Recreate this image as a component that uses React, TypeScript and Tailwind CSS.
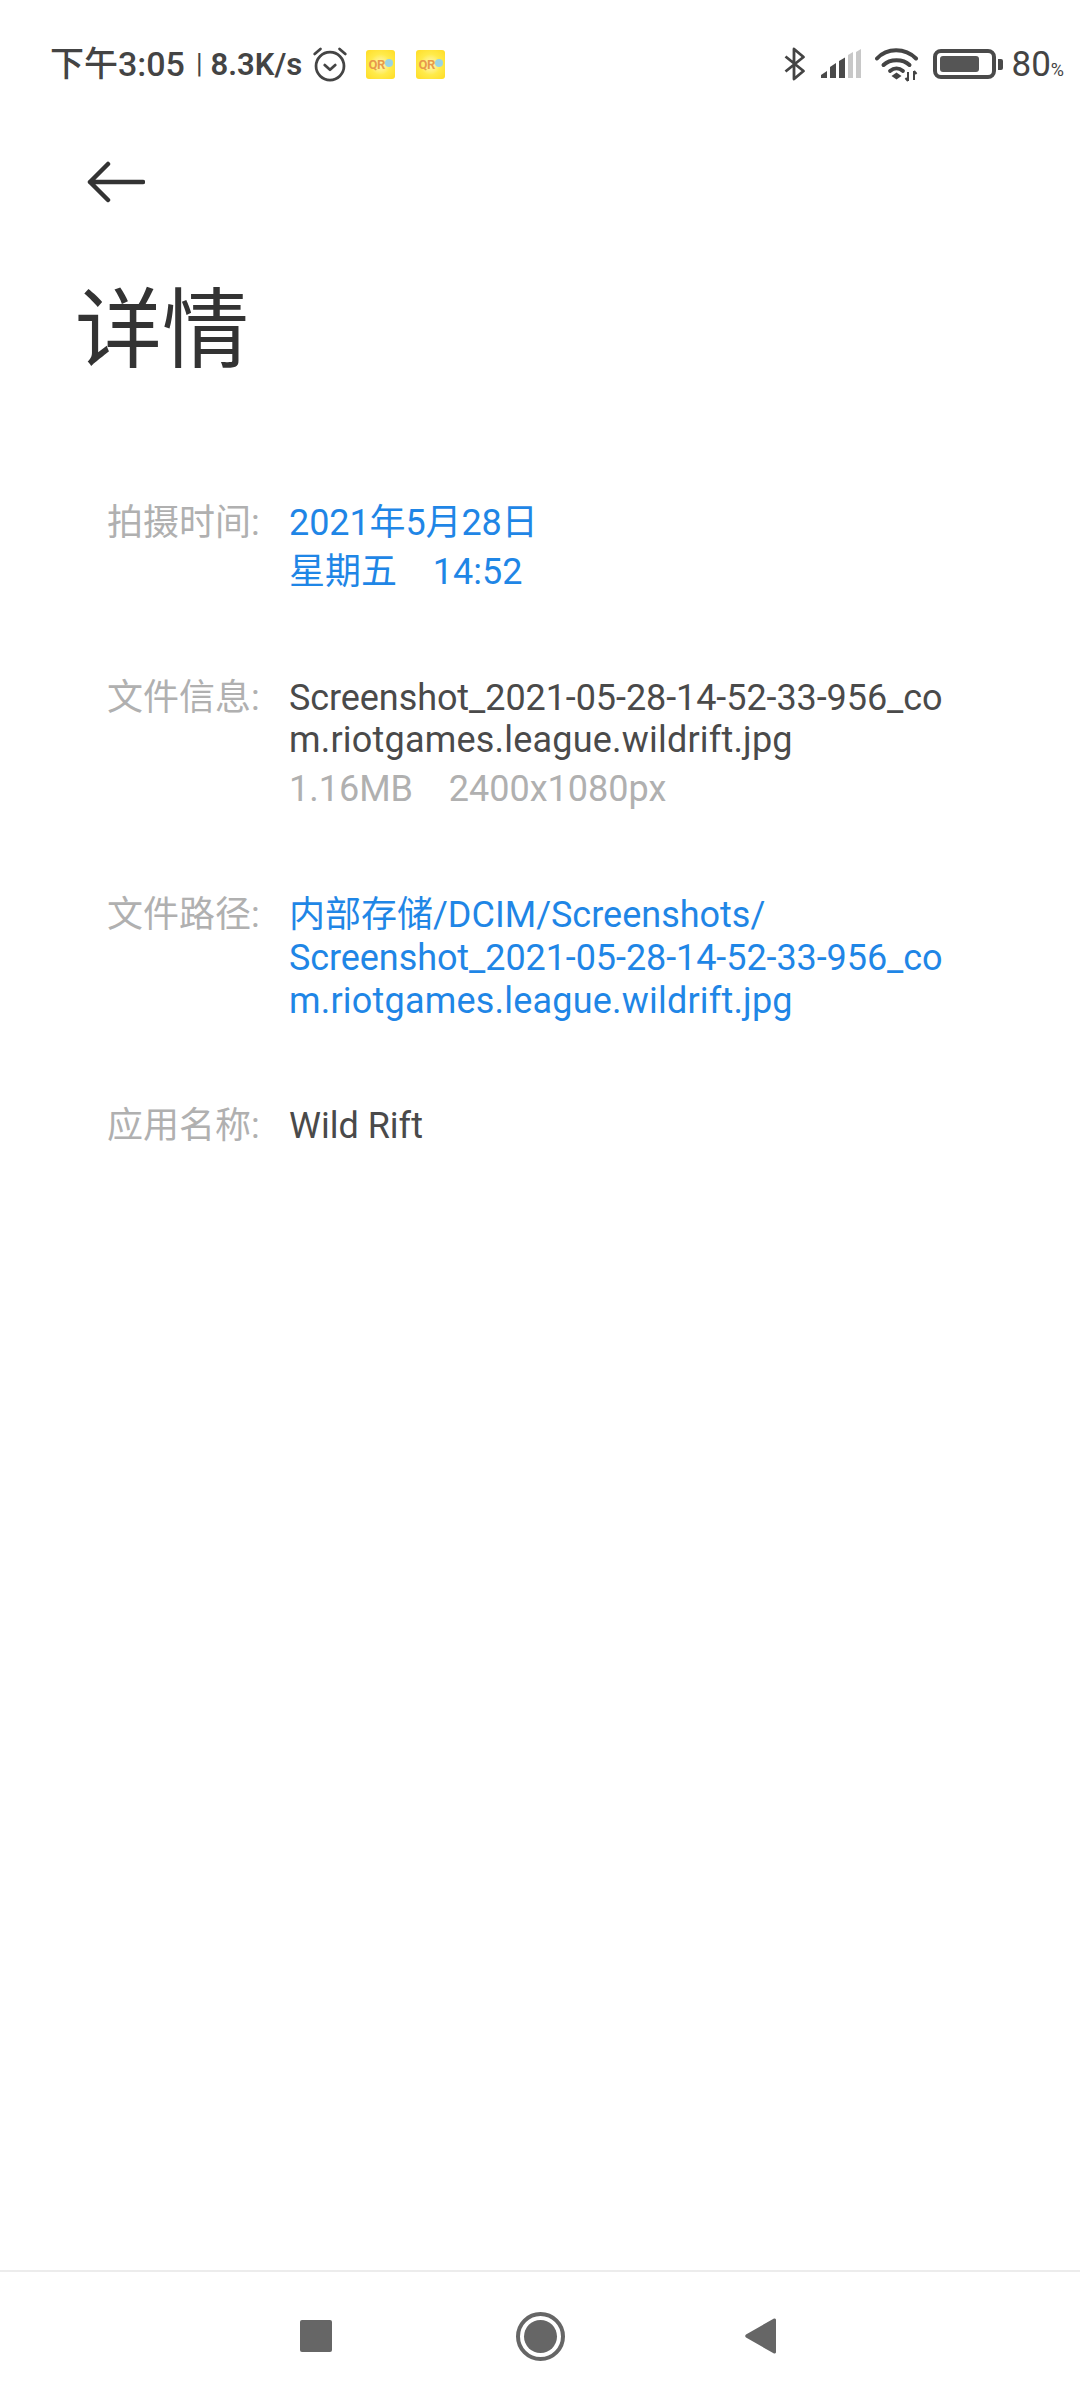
import React from 'react'

const FONT = 'font-[Roboto,"Noto_Sans_CJK_SC",sans-serif]'
const BLUE = 'text-[#1f86e6]'

function Alarm() {
  return (
    <svg width="36" height="36" viewBox="0 0 34 34" fill="none" stroke="#444" strokeWidth="2.6" strokeLinecap="round" strokeLinejoin="round">
      <circle cx="17" cy="19" r="13.2" />
      <path d="M12 18l5 4.5 5-4.500" />
      <path d="M2.5 7.5L8 2.8M31.5 7.5L26 2.8" />
    </svg>
  )
}

function QrIcon() {
  return (
    <div className="w-[29px] h-[29px] rounded-[3px] bg-radial from-[#fff9b8] via-[#ffeb4a] to-[#ffdc1e] flex items-center justify-center overflow-hidden">
      <span className="text-[13px] leading-none font-bold text-[#e89a4a] tracking-[-0.5px]">QR</span>
      <span className="w-[8px] h-[8px] rounded-full bg-[#9ad4e6] -mt-[3px]" />
    </div>
  )
}

function Bluetooth() {
  return (
    <svg width="22" height="34" viewBox="0 0 22 34" fill="none" stroke="#444" strokeWidth="2.8" strokeLinejoin="round">
      <path d="M1.5 9.5L19.5 24L10 32V2l9.5 8L1.5 24.5" />
    </svg>
  )
}

function Signal() {
  return (
    <svg width="40" height="30" viewBox="0 0 40 30">
      <path d="M0 29v-3l6-4v7z" fill="#4a4a4a" />
      <path d="M9 29V18l6-4v15z" fill="#4a4a4a" />
      <path d="M18 29V12l6-3.5V29z" fill="#4a4a4a" />
      <path d="M27 29V6l5-3V29z" fill="#c8c8c8" />
      <path d="M35 29V3l5-3v29z" fill="#c8c8c8" />
    </svg>
  )
}

function Wifi() {
  return (
    <svg width="44" height="36" viewBox="0 0 44 36" fill="none">
      <path d="M2 12.500C12 1.500 30 1.500 41 12.500" stroke="#444" strokeWidth="4" strokeLinecap="round" />
      <path d="M8.500 19C15 12.500 28 12.500 34.500 19" stroke="#444" strokeWidth="4" strokeLinecap="round" />
      <path d="M15 25c4-3.500 9-3.500 13 0" stroke="#444" strokeWidth="3.800" strokeLinecap="round" />
      <path d="M16.500 30l5-3.500 5 3.500-5 3.500z" fill="#444" />
      <path d="M33 26v9M30.500 32l2.500 3M39 25v9M39 25l2.500 3" stroke="#444" strokeWidth="2" />
    </svg>
  )
}

function Battery() {
  return (
    <div className="flex items-center gap-[2px]">
      <div className="w-[63px] h-[30px] rounded-[8px] border-[4px] border-[#4a4a4a] p-[3px] flex">
        <div className="w-[39px] bg-[#555] rounded-[3px]" />
      </div>
      <div className="w-[5px] h-[11px] rounded-r-[2px] bg-[#4a4a4a]" />
    </div>
  )
}

function StatusBar() {
  return (
    <div className="h-[130px] shrink-0 pl-[50px] pr-[16px] pt-[38px] flex justify-between items-start text-[#444]">
      <div className="flex items-center h-[52px]">
        <span className="text-[34px] leading-none font-medium">下午3:05</span>
        <span className="text-[27px] leading-none ml-[11px]">|</span>
        <span className="text-[31px] leading-none font-semibold ml-[8px]">8.3K/s</span>
        <div className="ml-[10px]"><Alarm /></div>
        <div className="ml-[18px]"><QrIcon /></div>
        <div className="ml-[21px]"><QrIcon /></div>
      </div>
      <div className="flex items-center h-[52px]">
        <Bluetooth />
        <div className="ml-[15px]"><Signal /></div>
        <div className="ml-[14px]"><Wifi /></div>
        <div className="ml-[14px]"><Battery /></div>
        <span className="ml-[8px] text-[35px] leading-none text-[#444]">80<span className="text-[18px]">%</span></span>
      </div>
    </div>
  )
}

function Row({label, children, className}: {label: string; children: React.ReactNode; className?: string}) {
  return (
    <div className={'flex ' + (className ?? '')}>
      <div className="w-[182px] shrink-0 text-[36px] leading-[49px] text-[#b0b0b0] whitespace-nowrap">{label}</div>
      <div className="text-[36px] whitespace-nowrap">{children}</div>
    </div>
  )
}

function FileName() {
  return (
    <>
      <div className="tracking-[-0.08px]">Screenshot_2021-05-28-14-52-33-956_co</div>
      <div className="tracking-[0.2px]">m.riotgames.league.wildrift.jpg</div>
    </>
  )
}

function NavBar() {
  return (
    <div className="h-[130px] shrink-0 border-t-2 border-[#ececec] flex items-center pl-[300px]">
      <div className="w-[32px] h-[32px] rounded-[2px] bg-[#666]" />
      <div className="ml-[184px] w-[49px] h-[49px] rounded-full border-[4px] border-[#666] p-[4px]">
        <div className="w-full h-full rounded-full bg-[#666]" />
      </div>
      <svg className="ml-[180px]" width="31" height="36" viewBox="0 0 31 36">
        <path d="M29 .5a1.500 1.500 0 0 1 2 1.500v32a1.500 1.500 0 0 1-2 1.500L1 19.500a1.800 1.800 0 0 1 0-3z" fill="#666" />
      </svg>
    </div>
  )
}

export default function App() {
  return (
    <div className={'w-[1080px] h-[2400px] bg-white flex flex-col ' + FONT}>
      <StatusBar />
      <div className="flex-1">
        <div className="pl-[87px] pt-[28px]">
          <svg width="58" height="48" viewBox="0 0 58 48" fill="none" stroke="#333" strokeWidth="4.500" strokeLinecap="round" strokeLinejoin="round">
            <path d="M56 24H3M21 6L3 24l18 18" />
          </svg>
        </div>
        <h1 className="pl-[75px] mt-[75px] text-[87px] leading-[100px] text-[#333] font-normal">详情</h1>
        <div className="pl-[107px] mt-[118px]">
          <Row label="拍摄时间:">
            <div className={'leading-[49px] tracking-[-0.1px] ' + BLUE}>2021年5月28日</div>
            <div className={'leading-[49px] whitespace-pre ' + BLUE}>星期五    14:52</div>
          </Row>
          <Row label="文件信息:" className="mt-[77px]">
            <div className="leading-[42px] pt-[3px] text-[#4a4a4a]"><FileName /></div>
            <div className="leading-[49px] mt-[4px] text-[#b0b0b0] whitespace-pre">1.16MB    2400x1080px</div>
          </Row>
          <Row label="文件路径:" className="mt-[77px]">
            <div className={'leading-[43px] pt-[3px] ' + BLUE}>
              <div>内部存储/DCIM/Screenshots/</div>
              <FileName />
            </div>
          </Row>
          <Row label="应用名称:" className="mt-[79px]">
            <div className="leading-[49px] text-[#4a4a4a]">Wild Rift</div>
          </Row>
        </div>
      </div>
      <NavBar />
    </div>
  )
}
